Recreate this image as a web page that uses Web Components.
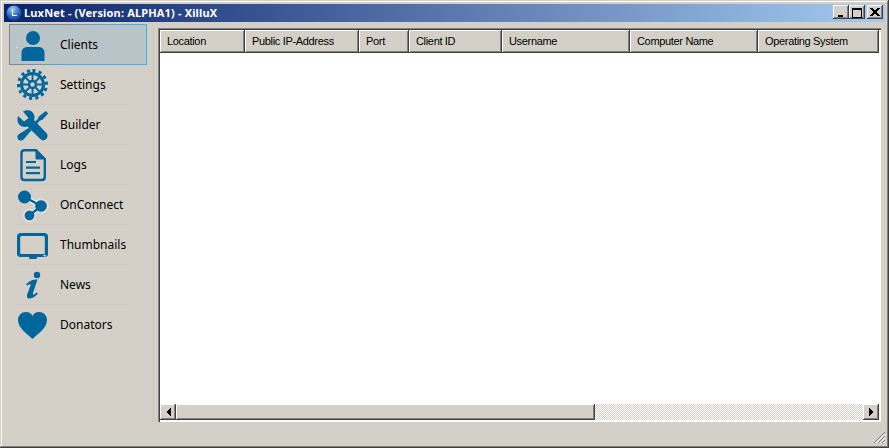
<!DOCTYPE html>
<html><head><meta charset="utf-8"><style>
html,body{margin:0;padding:0;background:#d4d0c8;overflow:hidden}
</style></head><body>
<lux-window title-text="LuxNet - (Version: ALPHA1) - XilluX">
  <lux-nav slot="nav">
    <lux-nav-item label="Clients" icon="user" selected></lux-nav-item>
    <lux-nav-item label="Settings" icon="gear"></lux-nav-item>
    <lux-nav-item label="Builder" icon="tools"></lux-nav-item>
    <lux-nav-item label="Logs" icon="doc"></lux-nav-item>
    <lux-nav-item label="OnConnect" icon="share"></lux-nav-item>
    <lux-nav-item label="Thumbnails" icon="screen"></lux-nav-item>
    <lux-nav-item label="News" icon="info"></lux-nav-item>
    <lux-nav-item label="Donators" icon="heart"></lux-nav-item>
  </lux-nav>
  <lux-list slot="main">
    <lux-col style="width:85px">Location</lux-col>
    <lux-col style="width:114px">Public IP-Address</lux-col>
    <lux-col style="width:50px">Port</lux-col>
    <lux-col style="width:93px">Client ID</lux-col>
    <lux-col style="width:128px">Username</lux-col>
    <lux-col style="width:128px">Computer Name</lux-col>
    <lux-col style="width:121px">Operating System</lux-col>
  </lux-list>
</lux-window>
<script>
const BEVEL='box-shadow:inset -1px -1px 0 #404040,inset 1px 1px 0 #fff,inset -2px -2px 0 #808080;';
const ICONS={
user:'<circle cx="16" cy="9" r="7"/><path d="M4.500 32V24C4.500 20 7 18 11 18H21C25 18 27.500 20 27.500 24V32Z"/><rect x="-.5" y="18" width="1" height="1" fill="#fff"/>',
gear:'<g fill="none" stroke="currentColor"><circle cx="15.500" cy="15.500" r="11" stroke-width="3"/><circle cx="15.500" cy="15.500" r="3.500" stroke-width="2.500"/><path stroke-width="1.800" d="M15.500 5V12M15.500 19V26M5 15.500H12M19 15.500H26M8 8L13 13M18 18L23 23M23 8L18 13M13 18L8 23"/><path stroke-width="3" stroke-dasharray="3.100 3.180" d="M15.500 1.500A14 14 0 1 1 15.490 1.500"/></g>',
tools:'<path d="M1 7L7 12.500L11.500 9L6 2.500C11 -.5 17.500 2 17.500 8.500C17.500 9.500 17.300 10.500 17 11L29.800 24.500C31 26 30.800 28.500 29.300 30C27.500 31.800 25 31.800 23.500 30.300L10.500 17.500C5 19.500 -1.500 15 1 7Z"/><path d="M28.800 2L31.200 4.400L25.200 11L23 11.500L19.500 15.200L17.700 13.200L21 9.800L21.800 7.500Z"/><path d="M12 18.800L14.500 21.300L6.500 30.500C5 32 2.500 32 1.200 30.500C0 29 0 27 1.500 25.500Z"/>',
doc:'<path fill="none" stroke="currentColor" stroke-width="2.400" stroke-linejoin="round" d="M7.500 1.200H19L27.800 10V28C27.800 30 26.800 31 24.800 31H7.500C5.500 31 4.500 30 4.500 28V4C4.500 2.200 5.500 1.200 7.500 1.200Z"/><path d="M18.500 1.500L27.500 10.500H20C19 10.500 18.500 10 18.500 9Z"/><path d="M9 12H19V14H9ZM9 17.500H23V19.700H9ZM9 23H23V25.200H9Z"/>',
share:'<g fill="none" stroke="#f4f2ee" stroke-width="1" stroke-dasharray="2 1"><circle cx="24" cy="17" r="7"/><circle cx="12.500" cy="26.500" r="6"/></g><path d="M7.500 8L24 17L12.500 26.500" fill="none" stroke="#f4f2ee" stroke-width="4.500"/><path d="M7.500 8L24 17L12.500 26.500" fill="none" stroke="currentColor" stroke-width="2.500"/><circle cx="7.500" cy="8" r="6.500"/><circle cx="24" cy="17" r="5.800"/><circle cx="12.500" cy="26.500" r="4.800"/>',
screen:'<path fill-rule="evenodd" d="M3.500 4H27.500C29.500 4 31 5.500 31 7.500V25C31 27 29.500 28 27.500 28H20L19.500 30H12.500L12 28H3.500C1.500 28 0 27 0 25V7.500C0 5.500 1.500 4 3.500 4ZM5 7C4 7 3.200 7.500 3.200 8.500V23.500C3.200 24.500 4 25 5 25H26C27 25 27.800 24.500 27.800 23.500V8.500C27.800 7.500 27 7 26 7Z"/><circle cx="27.500" cy="26.500" r="1" fill="#fff"/>',
info:'<circle cx="20" cy="6" r="3.200"/><path d="M9 16C11 12.500 15 10.500 20.500 10.500L16 24C15.500 26 16.500 26.500 19.500 23.500L21 24.500C18 28 15 29.500 12.500 29.500C10 29.500 9.500 27.500 10.300 25L13.500 16.500C14 15 12.500 14.500 10.500 16.500Z"/>',
heart:'<path d="M15.500 30C11 25.500 1 19.500 1 11C1 6.500 4.500 3 9 3C12 3 14.500 4.500 15.500 7C16.500 4.500 19 3 22 3C26.500 3 30 6.500 30 11C30 19.500 20 25.500 15.500 30Z"/>'
};
customElements.define('lux-window',class extends HTMLElement{constructor(){super();const s=this.attachShadow({mode:'open'});s.innerHTML=`<style>
:host{display:flex;flex-direction:column;box-sizing:border-box;width:889px;height:448px;background:#d4d0c8;padding:4px;position:relative;
box-shadow:inset -1px -1px 0 #404040,inset 1px 1px 0 #d4d0c8,inset -2px -2px 0 #808080,inset 2px 2px 0 #fff;font-family:"Noto Sans",sans-serif}
.bar{height:18px;box-sizing:border-box;flex:none;display:flex;align-items:center;background:linear-gradient(90deg,#0a246a,#a6caf0);padding:0 2px 2px}
.logo{width:16px;height:16px;flex:none;margin:2px 2px 0 0}
.t{font:bold 11px "Noto Sans",sans-serif;color:#fff;white-space:nowrap;flex:1;letter-spacing:.16px}
.body{flex:1;display:flex;min-height:0}
.nav{width:150px;flex:none;margin-bottom:22px;background:linear-gradient(#c8c5be,#c8c5be) no-repeat right bottom/1px calc(100% - 6px)}
.main{flex:1;min-width:0;padding:6px 4px 22px 4px;display:flex}
.grip{position:absolute;right:4px;bottom:4px;width:12px;height:12px}
lux-caption{flex:none}
</style><div class="bar"><svg class="logo" viewBox="0 0 16 16"><defs><radialGradient id="g" cx=".4" cy=".25" r=".85"><stop offset="0" stop-color="#a4ccf4"/><stop offset=".55" stop-color="#2f6ac4"/><stop offset="1" stop-color="#0c2c70"/></radialGradient></defs><circle cx="8" cy="8" r="7.500" fill="url(#g)"/><path d="M6 5H7V10H11V11H6Z" fill="#fff"/></svg><span class="t"></span><lux-caption kind="min"></lux-caption><lux-caption kind="max"></lux-caption><lux-caption kind="close" style="margin-left:2px"></lux-caption></div>
<div class="body"><div class="nav"><slot name="nav"></slot></div><div class="main"><slot name="main"></slot></div></div>
<svg class="grip" viewBox="0 0 12 12" fill="none" shape-rendering="crispEdges"><path stroke="#808080" d="M11.500 .5L.5 11.500M11.500 4.500L4.500 11.500M11.500 8.500L8.500 11.500"/><path stroke="#fff" d="M11.500 2.500L2.500 11.500M11.500 6.500L6.500 11.500M11.500 10.500L10.500 11.500"/></svg>`;
s.querySelector('.t').textContent=this.getAttribute('title-text');}});
customElements.define('lux-caption',class extends HTMLElement{constructor(){super();const s=this.attachShadow({mode:'open'});const k=this.getAttribute('kind');
const g={min:'<path d="M4 9H9V11H4Z" fill="#000"/>',max:'<path d="M2 2H12V12H2Z M3 4V11H11V4Z" fill="#000" fill-rule="evenodd"/>',close:'<path d="M2 2H4.500L7 4.800L9.500 2H12L8.300 6L12 10H9.500L7 7.200L4.500 10H2L5.700 6Z" fill="#000"/>'}[k];
s.innerHTML=`<style>:host{display:block;width:16px;height:14px;background:#d4d0c8;${BEVEL}}svg{display:block;margin:1px 0 0 1px}</style><svg width="13" height="12" viewBox="0 0 13 12" shape-rendering="crispEdges">${g}</svg>`;}});
customElements.define('lux-nav',class extends HTMLElement{constructor(){super();this.attachShadow({mode:'open'}).innerHTML=`<style>:host{display:flex;flex-direction:column;padding:0 0 0 5px;margin-top:2px}</style><slot></slot>`;}});
customElements.define('lux-nav-item',class extends HTMLElement{constructor(){super();const s=this.attachShadow({mode:'open'});s.innerHTML=`<style>
:host{display:flex;align-items:center;box-sizing:border-box;width:138px;height:40px;color:#000;font:12px "Noto Sans",sans-serif}
:host(:not([selected]):not(:last-child)){background:linear-gradient(#d0ccc5,#d0ccc5) no-repeat 7px bottom/114px 1px}
:host([selected]){height:41px;background:#b9c4c8;border:1px solid;border-image:linear-gradient(135deg,#7f8a90 30%,#3fb0f0 55%) 1}
svg{width:32px;height:32px;flex:none;margin:0 11px 0 8px;fill:#00669c;color:#00669c;overflow:visible}
:host([selected]) svg{margin-left:7px}
span{white-space:nowrap;margin-bottom:2px}
:host([selected]) span{margin-bottom:0}
</style><svg viewBox="0 0 32 32">${ICONS[this.getAttribute('icon')]}</svg><span></span>`;
s.querySelector('span').textContent=this.getAttribute('label');}});
customElements.define('lux-col',class extends HTMLElement{constructor(){super();this.attachShadow({mode:'open'}).innerHTML=`<style>
:host{display:flex;align-items:center;box-sizing:border-box;flex:none;height:100%;background:#d4d0c8;padding:0 0 2px 7px;white-space:nowrap;overflow:hidden;font:11px "Liberation Sans",sans-serif;letter-spacing:-.33px;color:#000;${BEVEL}}
</style><slot></slot>`;}});
customElements.define('lux-list',class extends HTMLElement{constructor(){super();this.attachShadow({mode:'open'}).innerHTML=`<style>
:host{display:flex;flex-direction:column;flex:1;min-width:0;box-sizing:border-box;background:#fff;padding:2px;box-shadow:inset 1px 1px 0 #808080,inset 2px 2px 0 #404040}
.head{display:flex;height:23px;flex:none;overflow:hidden}
.fill{flex:1}
.sb{display:flex;height:16px;flex:none;background-color:#fff;background-image:conic-gradient(#d4d0c8 25%,#fff 0 50%,#d4d0c8 0 75%,#fff 0);background-size:2px 2px}
.btn{width:16px;flex:none;background:#d4d0c8;display:flex;align-items:center;justify-content:center;${BEVEL}}
.thumb{width:419px;flex:none;background:#d4d0c8;${BEVEL}}
.sp{flex:1}
</style><div class="head"><slot></slot></div><div class="fill"></div>
<div class="sb"><div class="btn"><svg width="5" height="8" viewBox="0 0 5 8" shape-rendering="crispEdges"><path d="M4 0H5V8H4V7H3V6H2V5H1V3H2V2H3V1H4Z"/></svg></div><div class="thumb"></div><div class="sp"></div><div class="btn"><svg width="5" height="8" viewBox="0 0 5 8" shape-rendering="crispEdges"><path d="M0 0H1V1H2V2H3V3H4V5H3V6H2V7H1V8H0Z"/></svg></div></div>`;}});
</script></body></html>
